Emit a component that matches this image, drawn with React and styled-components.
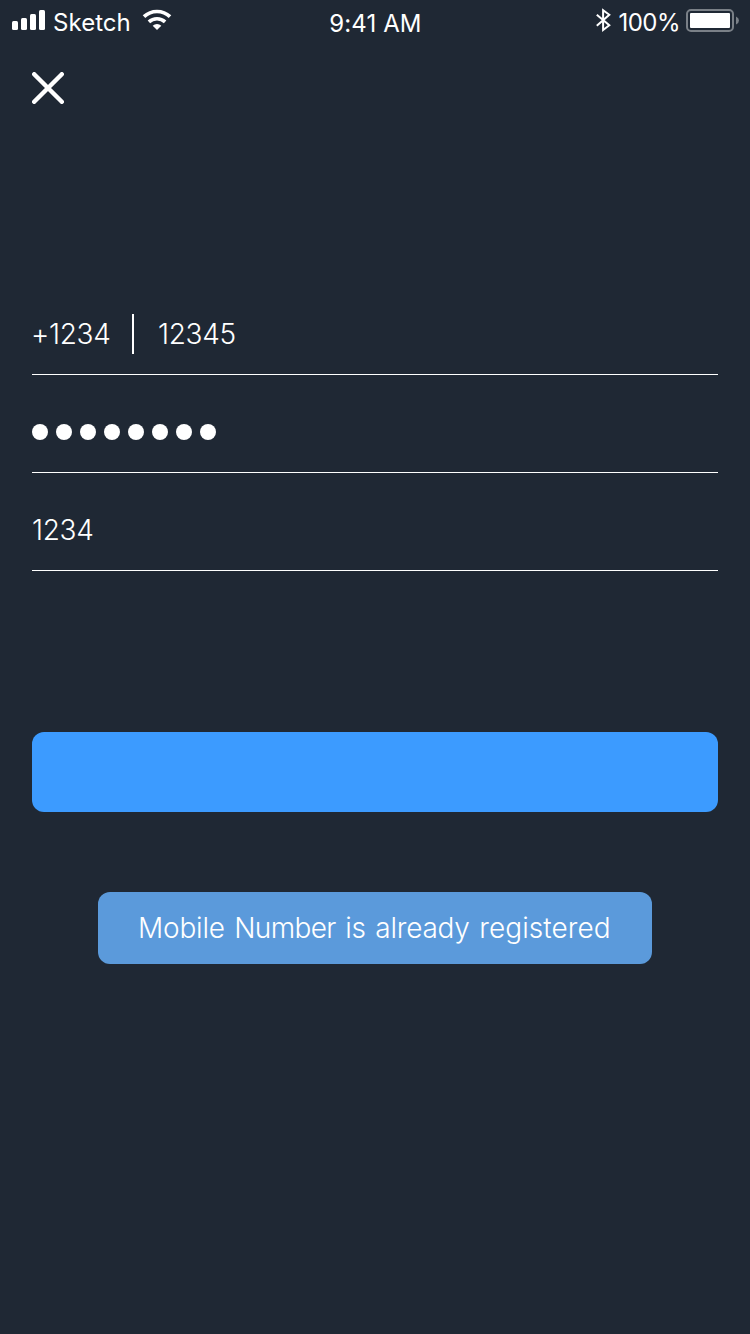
import React from "react";
import styled, { createGlobalStyle } from "styled-components";

const GlobalStyle = createGlobalStyle`
  * { box-sizing: border-box; }
  body { margin: 0; background: #1f2834; }
`;

const Screen = styled.div`
  display: flex;
  flex-direction: column;
  width: 750px;
  height: 1334px;
  overflow: hidden;
  background: #1f2834;
  color: #fff;
  font-family: Inter, "Liberation Sans", sans-serif;
  font-weight: 300;
`;

const StatusBar = styled.header`
  display: grid;
  grid-template-columns: 1fr auto 1fr;
  height: 40px;
  padding: 0 11px 0 12px;
`;

const StatusGroup = styled.div`
  display: flex;
  align-items: flex-start;
  justify-content: ${(p) => p.$align || "flex-start"};
`;

const StatusText = styled.span`
  margin: ${(p) => p.$margin || "0"};
  padding-top: ${(p) => p.$top || 8}px;
  font-size: 24px;
  font-weight: 400;
  line-height: 29px;
  letter-spacing: ${(p) => p.$spacing || 0}px;
  white-space: nowrap;
`;

const Icon = styled.svg`
  display: block;
  flex: none;
`;

const NavBar = styled.nav`
  display: flex;
  align-items: center;
  height: 96px;
  padding: 0 32px;
`;

const CloseButton = styled.button`
  padding: 0;
  border: 0;
  background: none;
  color: #fff;
`;

const Form = styled.form`
  display: flex;
  flex-direction: column;
  padding: 141px 32px 0;
`;

const Field = styled.div`
  display: flex;
  align-items: center;
  height: 98px;
  padding-top: 17px;
  border-bottom: 1px solid #fff;
`;

const Value = styled.span`
  font-size: 28px;
  line-height: 40px;
  letter-spacing: ${(p) => p.$spacing || 0}px;
  word-spacing: ${(p) => p.$wordSpacing || 0}px;
  white-space: nowrap;
`;

const DialCode = styled(Value)`
  width: 101px;
  margin-left: -1px;
`;

const Word = styled.span`
  letter-spacing: ${(p) => p.$spacing}px;
`;

const Separator = styled.span`
  width: 2px;
  height: 40px;
  margin-right: 24px;
  background: #fff;
`;

const Dots = styled.div`
  display: flex;
  gap: 8px;
`;

const Dot = styled.span`
  width: 16px;
  height: 16px;
  border-radius: 50%;
  background: #fff;
`;

const SubmitButton = styled.button`
  height: 80px;
  margin-top: 161px;
  border: 0;
  border-radius: 12px;
  background: #3c9bff;
`;

const Toast = styled.div`
  display: flex;
  align-items: center;
  align-self: center;
  width: 554px;
  height: 72px;
  margin-top: 80px;
  padding-left: 40px;
  border-radius: 12px;
  background: #5b9adb;
`;

const SignalIcon = () => (
  <Icon width="34" height="40" viewBox="0 0 34 40" fill="#fff">
    <rect x="0" y="21" width="6" height="9" rx="1.5" />
    <rect x="9" y="18" width="6" height="12" rx="1.5" />
    <rect x="18" y="14" width="6" height="16" rx="1.5" />
    <rect x="27" y="10" width="6" height="20" rx="1.5" />
  </Icon>
);

const WifiIcon = () => (
  <Icon width="30" height="40" viewBox="142 0 30 40" fill="none" stroke="#fff">
    <path d="M144 16.7A18.8 18.8 0 0 1 170 16.7" strokeWidth="3.7" />
    <path d="M148.9 21.9A11.8 11.8 0 0 1 165.1 21.9" strokeWidth="3.6" />
    <path d="M152.7 25.7A6.3 6.3 0 0 1 161.3 25.7L157 30Z" fill="#fff" stroke="none" />
  </Icon>
);

const BluetoothIcon = () => (
  <Icon width="16" height="40" viewBox="595 0 16 40" fill="none" stroke="#fff" strokeWidth="2">
    <path d="M596.8 14.7L609.3 25.3L603.1 30V10.2L609.3 14.8L596.8 25.7" />
  </Icon>
);

const BatteryIcon = () => (
  <Icon width="54" height="40" viewBox="685 0 54 40">
    <rect x="687" y="10" width="46" height="21" rx="4" fill="none" stroke="#7a8087" strokeWidth="2" />
    <rect x="690" y="13" width="40" height="15" rx="1" fill="#fff" />
    <path d="M736 16.5Q739 18 739 20.5Q739 23 736 24.5Z" fill="#7a8087" />
  </Icon>
);

const CloseIcon = () => (
  <Icon width="32" height="32" viewBox="0 0 32 32" stroke="currentColor" strokeWidth="4.4" strokeLinecap="round">
    <path d="M2.2 2.2L29.8 29.8M29.8 2.2L2.2 29.8" />
  </Icon>
);

export default function App() {
  return (
    <Screen>
      <GlobalStyle />
      <StatusBar>
        <StatusGroup>
          <SignalIcon />
          <StatusText $spacing={0.05} $margin="0 11px 0 7px">Sketch</StatusText>
          <WifiIcon />
        </StatusGroup>
        <StatusText $top={9} $spacing={0.1}>9:41 AM</StatusText>
        <StatusGroup $align="flex-end">
          <BluetoothIcon />
          <StatusText $spacing={-0.5} $margin="0 5px 0 7px">100%</StatusText>
          <BatteryIcon />
        </StatusGroup>
      </StatusBar>
      <NavBar>
        <CloseButton type="button" aria-label="Close">
          <CloseIcon />
        </CloseButton>
      </NavBar>
      <Form>
        <Field>
          <DialCode $spacing={-0.3}>+1234</DialCode>
          <Separator />
          <Value $spacing={-0.3}>12345</Value>
        </Field>
        <Field>
          <Dots>
            {Array.from({ length: 8 }, (_, i) => (
              <Dot key={i} />
            ))}
          </Dots>
        </Field>
        <Field>
          <Value $spacing={-0.3}>1234</Value>
        </Field>
        <SubmitButton type="button" aria-label="Submit" />
        <Toast>
          <Value $spacing={-0.2} $wordSpacing={1.8}>
            Mobile <Word $spacing={-0.65}>Number</Word> is already <Word $spacing={0.08}>registered</Word>
          </Value>
        </Toast>
      </Form>
    </Screen>
  );
}
